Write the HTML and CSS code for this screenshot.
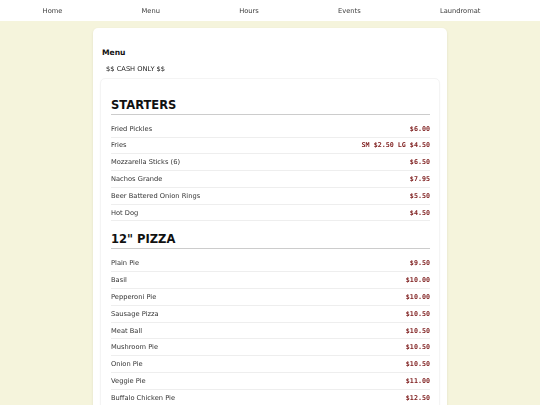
FILE: index.html
```html
<!DOCTYPE html>
<html>
<head>
  <meta charset="UTF-8">
  <title>Menu</title>
  <link rel="stylesheet" href="styles.css">
</head>
<body>
  <nav class="topnav">
    <a href="#">Home</a>
    <a href="#">Menu</a>
    <a href="#">Hours</a>
    <a href="#">Events</a>
    <a href="#">Laundromat</a>
  </nav>

  <div class="page">
    <div class="card">
      <h2 class="card-title">Menu</h2>
      <p class="note">$$ CASH ONLY $$</p>

      <div class="menu-box">
        <!-- Starters -->
        <section class="menu-section">
          <h3>STARTERS</h3>
          <div class="item"><span class="name">Fried Pickles</span><span class="price">$6.00</span></div>
          <div class="item"><span class="name">Fries</span><span class="price">SM $2.50 LG $4.50</span></div>
          <div class="item"><span class="name">Mozzarella Sticks (6)</span><span class="price">$6.50</span></div>
          <div class="item"><span class="name">Nachos Grande</span><span class="price">$7.95</span></div>
          <div class="item"><span class="name">Beer Battered Onion Rings</span><span class="price">$5.50</span></div>
          <div class="item"><span class="name">Hot Dog</span><span class="price">$4.50</span></div>
        </section>

        <!-- Pizza -->
        <section class="menu-section">
          <h3>12" PIZZA</h3>
          <div class="item"><span class="name">Plain Pie</span><span class="price">$9.50</span></div>
          <div class="item"><span class="name">Basil</span><span class="price">$10.00</span></div>
          <div class="item"><span class="name">Pepperoni Pie</span><span class="price">$10.00</span></div>
          <div class="item"><span class="name">Sausage Pizza</span><span class="price">$10.50</span></div>
          <div class="item"><span class="name">Meat Ball</span><span class="price">$10.50</span></div>
          <div class="item"><span class="name">Mushroom Pie</span><span class="price">$10.50</span></div>
          <div class="item"><span class="name">Onion Pie</span><span class="price">$10.50</span></div>
          <div class="item"><span class="name">Veggie Pie</span><span class="price">$11.00</span></div>
          <div class="item"><span class="name">Buffalo Chicken Pie</span><span class="price">$12.50</span></div>
        </section>
      </div>
    </div>
  </div>
</body>
</html>
```

FILE: styles.css
```css
:root {
  --bg-cream: #f5f4dc;
  --text-dark: #333;
  --price-red: #7d1a1a;
  --line-light: #eee;
}

body {
  margin: 0;
  font-family: 'DejaVu Sans', Verdana, sans-serif;
  font-size: 6.7px;
  color: var(--text-dark);
  background-color: var(--bg-cream);
}

/* Top navigation */
.topnav {
  display: flex;
  height: 21px;
  align-items: center;
  padding: 0 20px 0 3px;
  background: #fff;
}

.topnav a {
  flex: 1 1 auto;
  text-align: center;
  color: #3a3a3a;
  text-decoration: none;
  filter: grayscale(1);
}

.page {
  padding-top: 7px;
}

/* Main card */
.card {
  width: 354px;
  margin: 0 auto;
  padding: 0 7px 12px;
  box-sizing: border-box;
  background: #fff;
  border-radius: 5px;
  box-shadow: 0 1px 3px rgba(0, 0, 0, 0.08);
}

.card-title {
  margin: 0;
  padding: 20px 0 0 2px;
  font-size: 7.6px;
  line-height: 9px;
  color: #111;
}

.note {
  margin: 0;
  padding: 8px 0 0 6px;
  line-height: 9px;
  color: #222;
  filter: grayscale(1);
}

/* Inner menu box */
.menu-box {
  margin-top: 4px;
  padding: 9.5px 9px 10px 10px;
  border: 1px solid #f4f4f4;
  border-radius: 5px;
  box-shadow: 0 1px 2px rgba(0, 0, 0, 0.03);
}

.menu-section h3 {
  margin: 13px 0 6px;
  padding-bottom: 2.5px;
  font-size: 11.5px;
  line-height: 11.5px;
  color: #111;
  border-bottom: 1px solid #ccc;
}

.menu-section:first-child h3 {
  margin-top: 11px;
  margin-bottom: 6.3px;
}

.item {
  display: flex;
  justify-content: space-between;
  padding: 3.9px 0;
  line-height: 8px;
  border-bottom: 1px solid var(--line-light);
}

.name {
  color: var(--text-dark);
  filter: grayscale(1);
}

.price {
  font-family: 'DejaVu Sans Mono', monospace;
  font-weight: bold;
  color: var(--price-red);
  filter: saturate(0.99);
}
```
